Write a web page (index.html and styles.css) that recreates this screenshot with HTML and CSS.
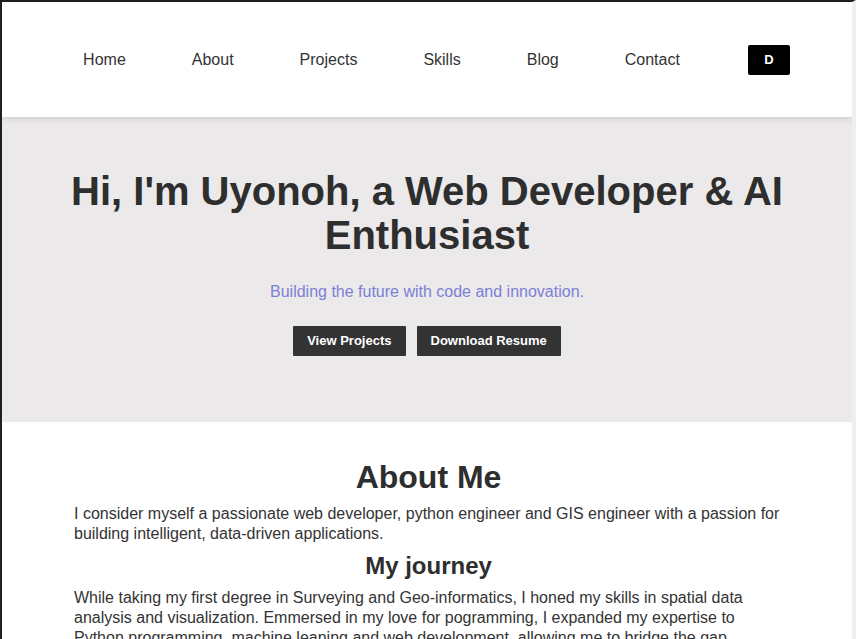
FILE: index.html
```html
<!DOCTYPE html>
<html lang="en">
<head>
<meta charset="utf-8">
<title>Uyonoh - Portfolio</title>
<link rel="stylesheet" href="styles.css">
</head>
<body>
<header class="site-header">
  <nav class="nav">
    <a class="nav-link" href="#home">Home</a>
    <a class="nav-link" href="#about">About</a>
    <a class="nav-link" href="#projects">Projects</a>
    <a class="nav-link" href="#skills">Skills</a>
    <a class="nav-link" href="#blog">Blog</a>
    <a class="nav-link" href="#contact">Contact</a>
    <button class="mode-btn" type="button">D</button>
  </nav>
</header>
<section class="hero" id="home">
  <h1 class="hero-title">Hi, I'm Uyonoh, a Web Developer &amp; AI Enthusiast</h1>
  <p class="hero-sub">Building the future with code and innovation.</p>
  <div class="hero-actions">
    <a class="btn" href="#projects">View Projects</a>
    <a class="btn" href="#resume">Download Resume</a>
  </div>
</section>
<section class="about" id="about">
  <h2 class="about-title">About Me</h2>
  <p class="about-text">I consider myself a passionate web developer, python engineer and GIS engineer with a passion for building intelligent, data-driven applications.</p>
  <h3 class="about-sub">My journey</h3>
  <p class="about-text">While taking my first degree in Surveying and Geo-informatics, I honed my skills in spatial data analysis and visualization. Emmersed in my love for pogramming, I expanded my expertise to Python programming, machine leaning and web development, allowing me to bridge the gap between data and the web.</p>
</section>
</body>
</html>
```
FILE: styles.css
```css
html {
  background: #ffffff;
}
body {
  margin: 0;
  height: 637px;
  overflow: hidden;
  border-top: 2px solid #1f1f1f;
  border-left: 2px solid #1f1f1f;
  border-right: 4px solid #efefef;
  font-family: "Liberation Sans", Arial, sans-serif;
  color: #333333;
  background: #ffffff;
}
.site-header {
  position: relative;
  z-index: 2;
  background: #ffffff;
  height: 115px;
  box-shadow: 0 2px 6px rgba(0, 0, 0, 0.12);
  display: flex;
  align-items: center;
  justify-content: center;
}
.nav {
  display: flex;
  align-items: center;
  gap: 66px;
  padding-left: 19px;
}
.nav-link {
  font-size: 16px;
  color: #333333;
  text-decoration: none;
}
.mode-btn {
  width: 42px;
  height: 30px;
  margin-left: 2px;
  border: none;
  border-radius: 2px;
  background: #000000;
  color: #ffffff;
  font-family: "Liberation Sans", Arial, sans-serif;
  font-weight: bold;
  font-size: 13px;
  padding: 0;
}
.hero {
  background: #ebe9ea;
  padding: 52px 60px 66px;
  text-align: center;
}
.hero-title {
  margin: 0 auto;
  max-width: 730px;
  font-size: 40px;
  line-height: 44px;
  font-weight: bold;
  color: #2e2e2e;
}
.hero-sub {
  margin: 26px 0 0;
  font-size: 16px;
  line-height: 18px;
  color: #7c80d6;
}
.hero-actions {
  margin-top: 25px;
  display: flex;
  justify-content: center;
  gap: 11px;
}
.btn {
  display: inline-block;
  background: #333333;
  color: #ffffff;
  text-decoration: none;
  font-weight: bold;
  font-size: 13px;
  line-height: 16px;
  padding: 7px 14px;
  border-radius: 1px;
}
.about {
  width: 709px;
  margin: 0 auto;
  padding-top: 37px;
  padding-left: 3px;
}
.about-title {
  margin: 0;
  text-align: center;
  font-size: 32px;
  line-height: 37px;
  color: #2e2e2e;
}
.about-text {
  margin: 8px 0 0;
  font-size: 16px;
  line-height: 20px;
  color: #333333;
}
.about-sub {
  margin: 8px 0 0;
  text-align: center;
  font-size: 24px;
  line-height: 28px;
  color: #2e2e2e;
}
```
